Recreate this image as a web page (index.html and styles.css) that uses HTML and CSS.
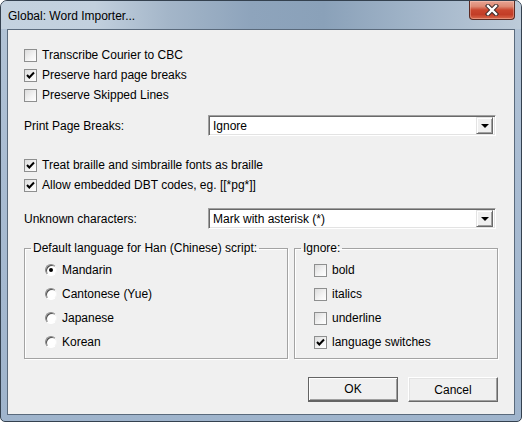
FILE: index.html
```html
<!DOCTYPE html>
<html>
<head>
<meta charset="utf-8">
<link rel="stylesheet" href="styles.css">
</head>
<body>
<div class="window">
  <div class="titlebar">
    <span class="title">Global: Word Importer...</span>
    <div class="close">
      <svg width="14" height="12" viewBox="0 0 14 12">
        <path d="M3 2 L11 10 M11 2 L3 10" stroke="#3a2a2a" stroke-width="4.4" stroke-linecap="square" fill="none"/>
        <path d="M3 2 L11 10 M11 2 L3 10" stroke="#ffffff" stroke-width="2.4" stroke-linecap="square" fill="none"/>
      </svg>
    </div>
  </div>
  <div class="client">
    <div class="check-list">
      <div class="check-row"><span class="cb"></span><span>Transcribe Courier to CBC</span></div>
      <div class="check-row"><span class="cb checked"><svg width="11" height="11" viewBox="0 0 11 11"><path d="M2 5 L4.3 7.5 L9 2.5" stroke="#000" stroke-width="2" fill="none"/></svg></span><span>Preserve hard page breaks</span></div>
      <div class="check-row"><span class="cb"></span><span>Preserve Skipped Lines</span></div>
    </div>
    <div class="field-row">
      <span class="field-label">Print Page Breaks:</span>
      <div class="combo"><span class="combo-text">Ignore</span><span class="combo-btn"><span class="arrow"></span></span></div>
    </div>
    <div class="check-list check-list-2">
      <div class="check-row"><span class="cb checked"><svg width="11" height="11" viewBox="0 0 11 11"><path d="M2 5 L4.3 7.5 L9 2.5" stroke="#000" stroke-width="2" fill="none"/></svg></span><span>Treat braille and simbraille fonts as braille</span></div>
      <div class="check-row"><span class="cb checked"><svg width="11" height="11" viewBox="0 0 11 11"><path d="M2 5 L4.3 7.5 L9 2.5" stroke="#000" stroke-width="2" fill="none"/></svg></span><span>Allow embedded DBT codes, eg. [[*pg*]]</span></div>
    </div>
    <div class="field-row field-row-2">
      <span class="field-label">Unknown characters:</span>
      <div class="combo"><span class="combo-text">Mark with asterisk (*)</span><span class="combo-btn"><span class="arrow"></span></span></div>
    </div>
    <div class="groups">
      <fieldset class="group group-lang">
        <legend>Default language for Han (Chinese) script:</legend>
        <div class="opt-row"><span class="radio on"></span><span>Mandarin</span></div>
        <div class="opt-row"><span class="radio"></span><span>Cantonese (Yue)</span></div>
        <div class="opt-row"><span class="radio"></span><span>Japanese</span></div>
        <div class="opt-row"><span class="radio"></span><span>Korean</span></div>
      </fieldset>
      <fieldset class="group group-ignore">
        <legend>Ignore:</legend>
        <div class="opt-row opt-cb"><span class="cb"></span><span>bold</span></div>
        <div class="opt-row opt-cb"><span class="cb"></span><span>italics</span></div>
        <div class="opt-row opt-cb"><span class="cb"></span><span>underline</span></div>
        <div class="opt-row opt-cb"><span class="cb checked"><svg width="11" height="11" viewBox="0 0 11 11"><path d="M2 5 L4.3 7.5 L9 2.5" stroke="#000" stroke-width="2" fill="none"/></svg></span><span>language switches</span></div>
      </fieldset>
    </div>
    <div class="buttons">
      <button class="btn btn-default">OK</button>
      <button class="btn">Cancel</button>
    </div>
  </div>
</div>
</body>
</html>
```
FILE: styles.css
```css
* { box-sizing: border-box; }
html, body { margin: 0; padding: 0; background: #ffffff; }
body { font-family: "Liberation Sans", Arial, sans-serif; font-size: 12px; color: #000; }

.window {
  width: 522px;
  height: 422px;
  border: 1px solid #34414f;
  border-radius: 7px 7px 5px 5px;
  background: linear-gradient(to bottom, #b3c4d6 0%, #a9bcd2 40%, #9fb4cc 100%);
  display: flex;
  flex-direction: column;
  overflow: hidden;
}

.titlebar {
  height: 28px;
  display: flex;
  align-items: flex-start;
  padding-left: 7px;
  background: linear-gradient(to right, #c4d2df 0%, #c2d0de 18%, #a4b6c9 32%, #8ea4bc 48%, #8aa1b9 62%, #a2b5c9 80%, #bdcbd9 100%);
}
.title {
  font-family: "Liberation Sans", Arial, sans-serif;
  font-size: 12px;
  line-height: 14px;
  margin-top: 8px;
  color: #000;
}
.close {
  margin-left: auto;
  margin-right: 6px;
  width: 46px;
  height: 19px;
  border: 1px solid #5b2a22;
  border-top: none;
  border-radius: 0 0 4px 4px;
  background: linear-gradient(to bottom, #e8a493 0%, #dd8a74 30%, #c9462e 50%, #c23d27 75%, #d9694c 100%);
  box-shadow: inset 0 0 0 1px rgba(255,220,210,0.35);
  display: flex;
  align-items: center;
  justify-content: center;
}

.client {
  flex: 1;
  margin: 0 6px 6px 6px;
  border: 1px solid #5a6a7c;
  background: #f0f0f0;
  padding: 15px 16px 0 16px;
  display: flex;
  flex-direction: column;
}

.check-row {
  height: 20px;
  display: flex;
  align-items: center;
}
.cb {
  width: 13px;
  height: 13px;
  border: 1px solid #8e8f8f;
  background: linear-gradient(135deg, #dcdcdc 0%, #f4f4f4 60%, #ffffff 100%);
  margin-right: 5px;
  display: flex;
  align-items: center;
  justify-content: center;
  flex: none;
}
.cb svg { display: block; }

.field-row {
  margin-top: 10px;
  height: 21px;
  display: flex;
  align-items: center;
}
.field-label { width: 184px; flex: none; }
.combo {
  width: 288px;
  height: 21px;
  border: 1px solid;
  border-color: #a0a0a0 #ffffff #ffffff #a0a0a0;
  box-shadow: inset 1px 1px 0 #696969, inset -1px -1px 0 #e3e3e3;
  background: #ffffff;
  display: flex;
  align-items: center;
  padding: 2px 2px 2px 4px;
}
.combo-text { flex: 1; }
.combo-btn {
  width: 17px;
  height: 17px;
  background: #f0f0f0;
  border: 1px solid;
  border-color: #e3e3e3 #696969 #696969 #e3e3e3;
  box-shadow: inset 1px 1px 0 #ffffff, inset -1px -1px 0 #a0a0a0;
  display: flex;
  align-items: center;
  justify-content: center;
}
.arrow {
  width: 0;
  height: 0;
  border-left: 4px solid transparent;
  border-right: 4px solid transparent;
  border-top: 4px solid #000;
  margin-top: 1px;
}

.check-list-2 { margin-top: 19px; }
.field-row-2 { margin-top: 13px; }

.groups {
  margin-top: 12px;
  display: flex;
  gap: 6px;
}
.group {
  margin: 0;
  border: 1px solid #a3a3a3;
  box-shadow: 1px 1px 0 #ffffff, inset 1px 1px 0 #ffffff;
  padding: 3px 6px 4px 6px;
  min-width: 0;
}
.group legend {
  padding: 0 2px;
  line-height: 14px;
}
.group-lang { width: 264px; }
.group-ignore { width: 204px; }

.opt-row {
  height: 24px;
  display: flex;
  align-items: center;
  margin-left: 14px;
}
.opt-cb { margin-left: 13px; }
.radio {
  position: relative;
  width: 12px;
  height: 12px;
  border-radius: 50%;
  border: 1px solid;
  border-color: #8a8a8a #f4f4f4 #ffffff #8a8a8a;
  box-shadow: inset 1px 1px 0 #505050;
  background: #ffffff;
  margin-right: 5px;
  flex: none;
}
.radio.on::after {
  content: "";
  position: absolute;
  left: 3px;
  top: 3px;
  width: 4px;
  height: 4px;
  border-radius: 50%;
  background: #000;
}

.buttons {
  margin-top: 18px;
  display: flex;
  justify-content: flex-end;
  gap: 10px;
}
.btn {
  width: 90px;
  height: 25px;
  font-family: "Liberation Sans", Arial, sans-serif;
  font-size: 12px;
  color: #000;
  background: #f0f0f0;
  border: 1px solid;
  border-color: #ffffff #696969 #696969 #ffffff;
  box-shadow: inset -1px -1px 0 #a0a0a0, inset 1px 1px 0 #e3e3e3;
  padding: 0;
}
.btn-default {
  border: 1px solid #646464;
  border-bottom-width: 2px;
  box-shadow: inset 1px 1px 0 #ffffff, inset -1px -1px 0 #a0a0a0;
}
```
